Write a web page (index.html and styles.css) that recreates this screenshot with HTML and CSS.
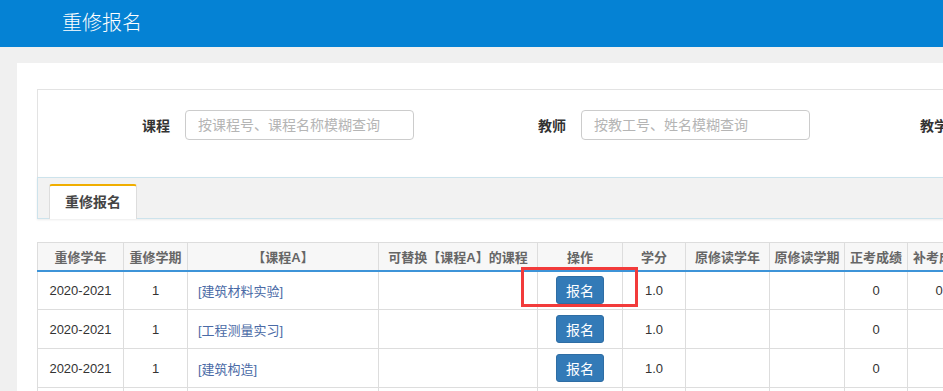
FILE: index.html
```html
<!DOCTYPE html>
<html lang="zh-CN">
<head>
  <meta charset="UTF-8">
  <meta name="viewport" content="width=device-width, initial-scale=1.0">
  <title>重修报名</title>
  <link rel="stylesheet" href="styles.css">
</head>
<body>
  <div class="topbar">
    <div class="title">重修报名</div>
  </div>
  <div class="main">
    <div class="panel">
      <div class="search">
        <div class="group">
          <label>课程</label>
          <input type="text" placeholder="按课程号、课程名称模糊查询">
        </div>
        <div class="group">
          <label>教师</label>
          <input type="text" placeholder="按教工号、姓名模糊查询">
        </div>
        <div class="group">
          <label>教学班</label>
          <input type="text" placeholder="按教学班名称模糊查询">
        </div>
      </div>
      <div class="tabbar">
        <div class="tab">重修报名</div>
      </div>
      <div class="table-wrap">
        <table class="grid">
          <colgroup>
            <col class="w86"><col class="w64"><col class="w191"><col class="w159"><col class="w85">
            <col class="w63"><col class="w84"><col class="w75"><col class="w63"><col class="w63">
            <col class="w86">
          </colgroup>
          <thead>
            <tr>
              <th>重修学年</th>
              <th>重修学期</th>
              <th>【课程A】</th>
              <th>可替换【课程A】的课程</th>
              <th>操作</th>
              <th>学分</th>
              <th>原修读学年</th>
              <th>原修读学期</th>
              <th>正考成绩</th>
              <th>补考成绩</th>
              <th>重修成绩</th>
            </tr>
          </thead>
          <tbody>
            <tr>
              <td>2020-2021</td>
              <td>1</td>
              <td class="left"><a href="#">[建筑材料实验]</a></td>
              <td></td>
              <td class="op"><button>报名</button><span class="mark"></span></td>
              <td>1.0</td>
              <td></td>
              <td></td>
              <td>0</td>
              <td>0</td>
              <td></td>
            </tr>
            <tr>
              <td>2020-2021</td>
              <td>1</td>
              <td class="left"><a href="#">[工程测量实习]</a></td>
              <td></td>
              <td class="op"><button>报名</button></td>
              <td>1.0</td>
              <td></td>
              <td></td>
              <td>0</td>
              <td></td>
              <td></td>
            </tr>
            <tr>
              <td>2020-2021</td>
              <td>1</td>
              <td class="left"><a href="#">[建筑构造]</a></td>
              <td></td>
              <td class="op"><button>报名</button></td>
              <td>1.0</td>
              <td></td>
              <td></td>
              <td>0</td>
              <td></td>
              <td></td>
            </tr>
            <tr>
              <td>2020-2021</td>
              <td>1</td>
              <td class="left"><a href="#">[建筑设备]</a></td>
              <td></td>
              <td class="op"><button>报名</button></td>
              <td>1.0</td>
              <td></td>
              <td></td>
              <td>0</td>
              <td></td>
              <td></td>
            </tr>
          </tbody>
        </table>
      </div>
    </div>
  </div>
</body>
</html>
```

FILE: styles.css
```css
* {
  box-sizing: border-box;
  margin: 0;
  padding: 0;
}
html, body {
  height: 100%;
  overflow: hidden;
}
body {
  font-family: "Liberation Sans", "Noto Sans CJK SC", sans-serif;
  background-color: #f0f0f0;
  color: #333;
}
.topbar {
  height: 47px;
  background-color: #0582d4;
}
.title {
  padding-left: 62px;
  line-height: 47px;
  font-size: 20px;
  font-weight: 300;
  color: #fff;
}
.main {
  padding: 16px 0 0 17px;
}
.panel {
  background-color: #fff;
  padding: 26px 0 0 20px;
  height: 400px;
  overflow: hidden;
}
.search {
  display: flex;
  height: 88px;
  padding-top: 20px;
  border: 1px solid #e3e3e3;
  border-right: none;
  border-bottom: none;
  overflow: hidden;
}
.group {
  flex: 0 0 396px;
  display: flex;
  align-items: center;
  height: 30px;
}
.group label {
  flex: 0 0 147px;
  padding-right: 15px;
  text-align: right;
  font-size: 14px;
  font-weight: bold;
  color: #333;
  white-space: nowrap;
}
.group input {
  width: 229px;
  height: 30px;
  padding: 0 12px;
  border: 1px solid #ccc;
  border-radius: 4px;
  font-family: inherit;
  font-size: 14px;
  color: #555;
}
.group input::placeholder {
  color: #b5b5b5;
}
.tabbar {
  height: 42px;
  padding: 6px 0 0 11px;
  background-color: #f2f2f2;
  border: 1px solid #cde3ec;
  border-right: none;
  box-shadow: 0 1px 2px rgba(0, 0, 0, 0.08);
  display: flex;
  align-items: flex-end;
}
.tab {
  width: 88px;
  height: 35px;
  margin-bottom: -1px;
  background-color: #fff;
  border: 1px solid #ddd;
  border-top: 2px solid #f0ae00;
  border-bottom: none;
  border-radius: 3px 3px 0 0;
  text-align: center;
  line-height: 32px;
  font-size: 14px;
  font-weight: bold;
  color: #444;
}
.table-wrap {
  margin-top: 23px;
}
.grid {
  border-collapse: collapse;
  table-layout: fixed;
  width: 1019px;
  font-size: 13px;
}
.w86 { width: 86px; }
.w64 { width: 64px; }
.w191 { width: 191px; }
.w159 { width: 159px; }
.w85 { width: 85px; }
.w63 { width: 63px; }
.w84 { width: 84px; }
.w75 { width: 75px; }
.grid th {
  height: 28px;
  background-color: #f7f7f7;
  border: 1px solid #ddd;
  border-bottom: 2px solid #3d94d8;
  color: #666;
  font-weight: bold;
  white-space: nowrap;
  overflow: hidden;
  text-align: center;
}
.grid td {
  height: 39px;
  border: 1px solid #ddd;
  text-align: center;
  color: #333;
  white-space: nowrap;
}
.grid td.left {
  text-align: left;
  padding-left: 10px;
}
.grid td a {
  color: #4a6aa6;
  text-decoration: none;
  font-size: 13px;
}
.op {
  position: relative;
}
.op button {
  width: 48px;
  height: 28px;
  background-color: #337ab7;
  border: 1px solid #2e6da4;
  border-radius: 3px;
  color: #fff;
  font-family: inherit;
  font-size: 14px;
  cursor: pointer;
}
.mark {
  position: absolute;
  left: -17px;
  top: -5px;
  width: 117px;
  height: 40px;
  border: 3px solid #f23b3b;
}
```
